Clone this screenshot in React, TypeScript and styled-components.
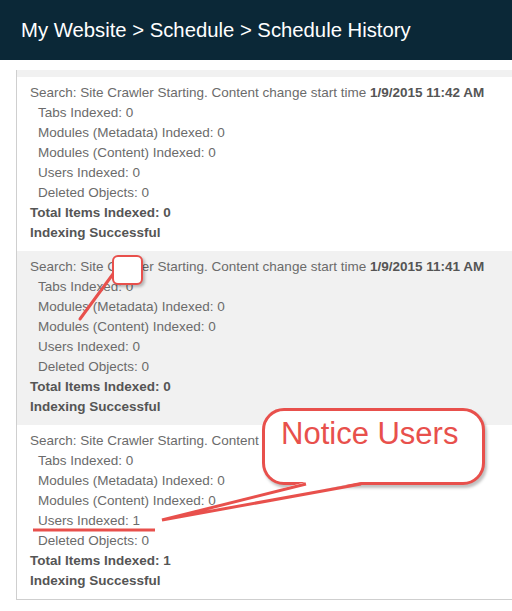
import styled, { createGlobalStyle } from "styled-components";

const GlobalStyle = createGlobalStyle`
  html, body {
    margin: 0;
    padding: 0;
    background: #ffffff;
    font-family: "Liberation Sans", Arial, sans-serif;
  }
`;

const Page = styled.div`
  position: relative;
  width: 512px;
  height: 611px;
  overflow: hidden;
`;

const Header = styled.div`
  height: 60px;
  background: #0b2837;
  color: #ffffff;
  font-size: 20.3px;
  display: flex;
  align-items: center;
  padding-left: 21px;
  box-sizing: border-box;
`;

const HistoryPanel = styled.div`
  margin: 10px 0 0 16px;
  width: 520px;
  border-left: 1px solid #cfcfcf;
  border-bottom: 1px solid #cfcfcf;
`;

const Strip = styled.div`
  height: 7px;
  background: #f1f1f1;
`;

const Entry = styled.div<{ $shaded?: boolean }>`
  background: ${(p) => (p.$shaded ? "#f1f1f1" : "#ffffff")};
  padding: 6px 0 8px 13px;
  font-size: 13.5px;
  line-height: 20px;
  color: #6b6b6b;
`;

const Line = styled.div<{ $indent?: boolean; $bold?: boolean }>`
  padding-left: ${(p) => (p.$indent ? "8px" : "0")};
  font-weight: ${(p) => (p.$bold ? "bold" : "normal")};
  color: ${(p) => (p.$bold ? "#555555" : "#6b6b6b")};
  white-space: nowrap;
`;

const Stamp = styled.b`
  color: #555555;
`;

const Callout = styled.div`
  position: absolute;
  left: 262px;
  top: 408px;
  width: 223px;
  height: 77px;
  box-sizing: border-box;
  border: 3px solid #e8504c;
  border-radius: 22px;
  background: #ffffff;
  box-shadow: 2px 3px 3px rgba(0, 0, 0, 0.25);
  color: #e8504c;
  font-size: 31px;
  line-height: 36px;
  padding: 5px 0 0 16px;
`;

const Marker = styled.div`
  position: absolute;
  left: 112px;
  top: 255px;
  width: 31px;
  height: 30px;
  box-sizing: border-box;
  border: 2.5px solid #e8504c;
  border-radius: 6px;
  background: #ffffff;
  box-shadow: 2px 2px 3px rgba(0, 0, 0, 0.25);
`;

const Overlay = styled.svg`
  position: absolute;
  left: 0;
  top: 0;
  pointer-events: none;
`;

type Run = { time: string; users: number; total: number; shaded?: boolean };

const runs: Run[] = [
  { time: "1/9/2015 11:42 AM", users: 0, total: 0 },
  { time: "1/9/2015 11:41 AM", users: 0, total: 0, shaded: true },
  { time: "1/9/2015 11:40 AM", users: 1, total: 1 },
];

export default function App() {
  return (
    <>
      <GlobalStyle />
      <Page>
        <Header>My Website &gt; Schedule &gt; Schedule History</Header>
        <HistoryPanel>
          <Strip />
          {runs.map((run, key) => (
            <Entry key={`run_${key}`} $shaded={run.shaded}>
              <Line>
                Search: Site Crawler Starting. Content change start time{" "}
                <Stamp>{run.time}</Stamp>
              </Line>
              <Line $indent>Tabs Indexed: 0</Line>
              <Line $indent>Modules (Metadata) Indexed: 0</Line>
              <Line $indent>Modules (Content) Indexed: 0</Line>
              <Line $indent>Users Indexed: {run.users}</Line>
              <Line $indent>Deleted Objects: 0</Line>
              <Line $bold>Total Items Indexed: {run.total}</Line>
              <Line $bold>Indexing Successful</Line>
            </Entry>
          ))}
        </HistoryPanel>

        {/* markup drawn over the screenshot */}
        <Overlay width="512" height="611">
          <line x1="113" y1="274" x2="80" y2="319" stroke="#e8504c" strokeWidth="3" strokeLinecap="round" />
          <line x1="33" y1="530" x2="155" y2="530" stroke="#e8504c" strokeWidth="3" />
        </Overlay>
        <Marker />
        <Callout>Notice Users</Callout>
        <Overlay width="512" height="611">
          <polygon points="306,482 162,520 361,482" fill="#ffffff" />
          <polyline points="306,484 162,520 361,484" fill="none" stroke="#e8504c" strokeWidth="3" strokeLinejoin="miter" />
        </Overlay>
      </Page>
    </>
  );
}
